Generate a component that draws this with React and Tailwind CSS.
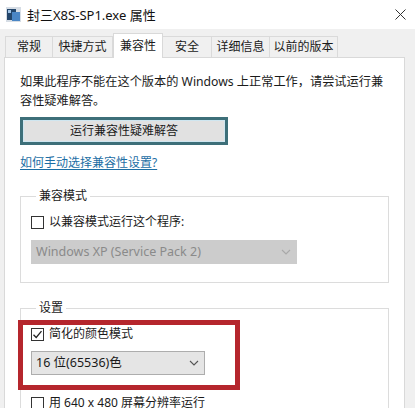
import React from 'react'

const tabs = [
  { label: '常规', w: 'w-[48px]' },
  { label: '快捷方式', w: 'w-[60px]' },
  { label: '兼容性', w: 'w-[50px]', active: true },
  { label: '安全', w: 'w-[49px]' },
  { label: '详细信息', w: 'w-[58px]' },
  { label: '以前的版本', w: 'w-[68px]' },
]

function Checkbox({ checked }) {
  return (
    <span className="w-[13px] h-[13px] border border-[#333] bg-white flex items-center justify-center shrink-0">
      {checked && (
        <svg width="11" height="11" viewBox="0 0 11 11">
          <path d="M1.5 5.8 L4.2 8.5 L9.5 2.2" fill="none" stroke="#222" strokeWidth="1.3" />
        </svg>
      )}
    </span>
  )
}

function Chevron({ color }) {
  return (
    <svg width="10" height="6" viewBox="0 0 10 6">
      <path d="M1 1 L5 5 L9 1" fill="none" stroke={color} strokeWidth="1.1" />
    </svg>
  )
}

export default function App() {
  return (
    <div className="w-[415px] h-[408px] overflow-hidden bg-[#f0f0f0] text-[12px] text-[#1a1a1a] font-['Noto_Sans','Noto_Sans_CJK_SC',sans-serif]">
      {/* title bar */}
      <div className="h-[29px] bg-white flex items-center pl-[6px] pr-[9px]">
        <svg width="15" height="15" viewBox="0 0 15 15" className="mr-[6px]">
          <rect x="0" y="0" width="15" height="15" fill="#d6dde5" />
          <rect x="1" y="2" width="9" height="11" fill="#23466b" />
          <rect x="6" y="5" width="8" height="9" fill="#4a86c5" />
          <rect x="2" y="3" width="3" height="3" fill="#9fc3e6" />
        </svg>
        <span className="text-[13px] leading-[18px] text-[#111]">封三X8S-SP1.exe 属性</span>
        <svg width="11" height="11" viewBox="0 0 11 11" className="ml-auto">
          <path d="M0.5 0.5 L10.5 10.5 M10.5 0.5 L0.5 10.5" stroke="#333" strokeWidth="1" />
        </svg>
      </div>

      {/* tabs */}
      <div className="mt-[4px] h-[24px] flex items-end pl-[5px] relative z-10">
        {tabs.map((t) => (
          <div
            key={t.label}
            className={
              t.active
                ? `${t.w} h-[25px] -mb-[1px] bg-white border border-b-0 border-[#d9d9d9] flex items-center justify-center leading-[18px]`
                : `${t.w} h-[21px] bg-[#f0f0f0] border border-b-0 border-l-0 first:border-l border-[#dadada] flex items-center justify-center leading-[18px]`
            }
          >
            {t.label}
          </div>
        ))}
      </div>

      {/* panel */}
      <div className="ml-[4px] w-[401px] h-[360px] bg-white border border-[#d9d9d9] pl-[15px] pt-[14px]">
        <p className="leading-[19px] w-[372px] text-[12.2px]">
          如果此程序不能在这个版本的 Windows 上正常工作，请尝试运行兼
          <br />
          容性疑难解答。
        </p>

        <button className="mt-[7px] w-[208px] h-[28px] bg-[#e1e1e1] border-[3px] border-[#3d6f79] shadow-[inset_0_0_0_1px_#cfe6f0] flex items-center justify-center leading-[18px]">
          运行兼容性疑难解答
        </button>

        <a className="block mt-[9px] leading-[18px] text-[#1c6ea4] underline underline-offset-2 w-fit">
          如何手动选择兼容性设置?
        </a>

        <fieldset className="mt-[15px] w-[369px] border border-[#dcdcdc] pl-[10px] pb-[18px]">
          <legend className="ml-[5px] px-[3px] leading-[18px]">兼容模式</legend>
          <label className="mt-[8px] h-[18px] flex items-center gap-[5px] leading-[18px]">
            <Checkbox />
            以兼容模式运行这个程序:
          </label>
          <div className="mt-[9px] w-[266px] h-[24px] bg-[#cccccc] flex items-center pl-[5px] pr-[6px] text-[#8a8a8a] leading-[18px] text-[12.5px]">
            Windows XP (Service Pack 2)
            <span className="ml-auto">
              <Chevron color="#a8a8a8" />
            </span>
          </div>
        </fieldset>

        <fieldset className="relative mt-[16px] w-[369px] h-[120px] border border-[#dcdcdc] pl-[10px]">
          <legend className="ml-[5px] px-[3px] leading-[18px]">设置</legend>
          <label className="mt-[8px] h-[18px] flex items-center gap-[5px] leading-[18px]">
            <Checkbox checked />
            简化的颜色模式
          </label>
          <div className="mt-[8px] w-[174px] h-[24px] bg-[#e5e5e5] border border-[#adadad] flex items-center pl-[4px] pr-[5px] leading-[18px] text-[12.5px]">
            16 位(65536)色
            <span className="ml-auto">
              <Chevron color="#555" />
            </span>
          </div>
          <label className="mt-[19px] h-[18px] flex items-center gap-[5px] leading-[18px]">
            <Checkbox />
            用 640 x 480 屏幕分辨率运行
          </label>

          {/* red highlight annotation */}
          <div className="absolute left-[-3px] top-[3px] w-[222px] h-[70px] border-[5px] border-[#b5262d] pointer-events-none" />
        </fieldset>
      </div>
    </div>
  )
}
